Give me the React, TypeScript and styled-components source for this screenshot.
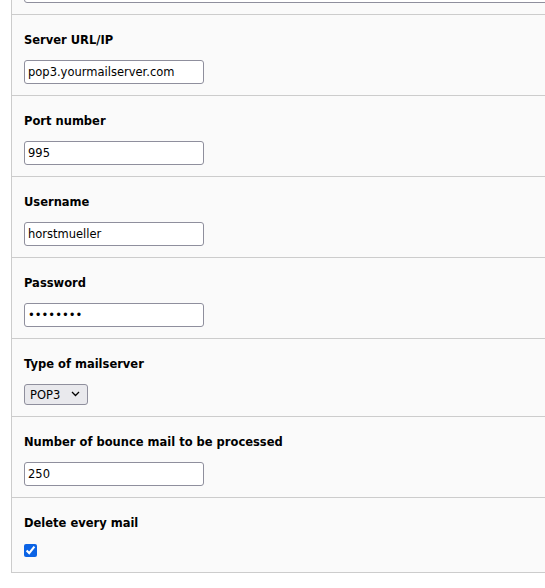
import React from "react";
import styled, { createGlobalStyle } from "styled-components";

const Global = createGlobalStyle`
  html, body { margin: 0; padding: 0; background: #ffffff; overflow: hidden; }
  body { font-family: "DejaVu Sans", Verdana, sans-serif; font-size: 11.5px; color: #000; }
`;

const Viewport = styled.div`
  height: 588px;
  overflow: hidden;
  padding-left: 11px;
`;

const Panel = styled.div`
  width: 600px;
  margin-top: -70px;
  background: #fafafa;
  border: 1px solid #cccccc;
`;

const Section = styled.div`
  padding: 15px 12px 11px;
  border-top: 1px solid #cccccc;
  &:first-child { border-top: none; padding-top: 12px; }
  display: flex;
  flex-direction: column;
  align-items: flex-start;
`;

const Label = styled.label`
  display: block;
  font-weight: bold;
  font-size: 11.5px;
  line-height: 20px;
  margin-bottom: 10px;
`;

const TextInput = styled.input`
  box-sizing: border-box;
  width: 180px;
  height: 24px;
  padding: 0 3px;
  border: 1px solid #8f8f9d;
  border-radius: 3px;
  background: #ffffff;
  font-family: "DejaVu Sans", Verdana, sans-serif;
  font-size: 11.5px;
  color: #000;
  margin: 0;
  outline: none;
`;

const TextArea = styled.textarea`
  box-sizing: border-box;
  width: 560px;
  height: 60px;
  border: 1px solid #8f8f9d;
  border-radius: 3px;
  background: #ffffff;
  margin: 0;
  display: block;
  resize: none;
`;

const SelectWrap = styled.div`
  position: relative;
  display: inline-block;
`;

const Select = styled.select`
  appearance: none;
  box-sizing: border-box;
  height: 21px;
  width: 64px;
  padding: 0 0 0 5px;
  margin: 0;
  border: 1px solid #8f8f9d;
  border-radius: 3px;
  background: #e9e9ed;
  font-family: "DejaVu Sans", Verdana, sans-serif;
  font-size: 11.5px;
  color: #000;
  outline: none;
`;

const Chevron = styled.svg`
  position: absolute;
  right: 8px;
  top: 7px;
  width: 9px;
  height: 6px;
  pointer-events: none;
`;

const Check = styled.input`
  width: 13px;
  height: 13px;
  margin: 1px 0 4px;
  accent-color: #0b63e5;
`;

export default function App() {
  return (
    <>
      <Global />
      <Viewport>
        <Panel>
          <Section>
            <TextArea readOnly aria-label="Description" />
          </Section>
          <Section>
            <Label>Server URL/IP</Label>
            <TextInput defaultValue="pop3.yourmailserver.com" />
          </Section>
          <Section>
            <Label>Port number</Label>
            <TextInput defaultValue="995" />
          </Section>
          <Section>
            <Label>Username</Label>
            <TextInput defaultValue="horstmueller" />
          </Section>
          <Section>
            <Label>Password</Label>
            <TextInput type="password" defaultValue="secret12" />
          </Section>
          <Section>
            <Label>Type of mailserver</Label>
            <SelectWrap>
              <Select defaultValue="POP3">
                <option value="POP3">POP3</option>
                <option value="IMAP">IMAP</option>
              </Select>
              <Chevron viewBox="0 0 9 6">
                <path d="M1 1 L4.5 4.5 L8 1" fill="none" stroke="#000" strokeWidth="1.3" />
              </Chevron>
            </SelectWrap>
          </Section>
          <Section>
            <Label>Number of bounce mail to be processed</Label>
            <TextInput defaultValue="250" />
          </Section>
          <Section>
            <Label>Delete every mail</Label>
            <Check type="checkbox" defaultChecked />
          </Section>
        </Panel>
      </Viewport>
    </>
  );
}
